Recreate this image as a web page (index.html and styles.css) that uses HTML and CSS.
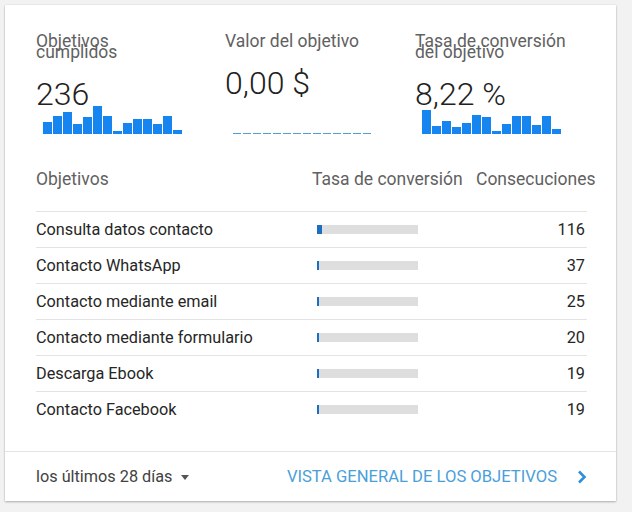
FILE: index.html
```html
<!DOCTYPE html>
<html lang="es">
<head>
<meta charset="utf-8">
<title>Objetivos</title>
<link rel="stylesheet" href="styles.css">
</head>
<body>
<div class="card">
  <div class="metrics">
    <div class="metric">
      <div class="m-title">Objetivos<br>cumplidos</div>
      <div class="m-value">236</div>
      <div class="chart">
        <span class="bar" style="height:12px"></span><span class="bar" style="height:18px"></span><span class="bar" style="height:22px"></span><span class="bar" style="height:10px"></span><span class="bar" style="height:17px"></span><span class="bar" style="height:28px"></span><span class="bar" style="height:18px"></span><span class="bar" style="height:3px"></span><span class="bar" style="height:11px"></span><span class="bar" style="height:15px"></span><span class="bar" style="height:15px"></span><span class="bar" style="height:10px"></span><span class="bar" style="height:18px"></span><span class="bar" style="height:4px"></span>
      </div>
    </div>
    <div class="metric">
      <div class="m-title">Valor del objetivo</div>
      <div class="m-value">0,00 $</div>
      <div class="chart chart-empty">
        <span class="dash"></span><span class="dash"></span><span class="dash"></span><span class="dash"></span><span class="dash"></span><span class="dash"></span><span class="dash"></span><span class="dash"></span><span class="dash"></span><span class="dash"></span><span class="dash"></span><span class="dash"></span><span class="dash"></span><span class="dash"></span>
      </div>
    </div>
    <div class="metric">
      <div class="m-title">Tasa de conversión<br>del objetivo</div>
      <div class="m-value">8,22 %</div>
      <div class="chart">
        <span class="bar" style="height:24px"></span><span class="bar" style="height:8px"></span><span class="bar" style="height:13px"></span><span class="bar" style="height:7px"></span><span class="bar" style="height:11px"></span><span class="bar" style="height:19px"></span><span class="bar" style="height:17px"></span><span class="bar" style="height:3px"></span><span class="bar" style="height:10px"></span><span class="bar" style="height:18px"></span><span class="bar" style="height:18px"></span><span class="bar" style="height:9px"></span><span class="bar" style="height:18px"></span><span class="bar" style="height:5px"></span>
      </div>
    </div>
  </div>

  <div class="table">
    <div class="thead">
      <div class="th th-name">Objetivos</div>
      <div class="th th-rate">Tasa de conversión</div>
      <div class="th th-count">Consecuciones</div>
    </div>
    <div class="tbody">
      <div class="row"><div class="c-name">Consulta datos contacto</div><div class="c-rate"><div class="track"><div class="fill" style="width:5px"></div></div></div><div class="c-count">116</div></div>
      <div class="row"><div class="c-name">Contacto WhatsApp</div><div class="c-rate"><div class="track"><div class="fill" style="width:2px"></div></div></div><div class="c-count">37</div></div>
      <div class="row"><div class="c-name">Contacto mediante email</div><div class="c-rate"><div class="track"><div class="fill" style="width:1.5px"></div></div></div><div class="c-count">25</div></div>
      <div class="row"><div class="c-name">Contacto mediante formulario</div><div class="c-rate"><div class="track"><div class="fill" style="width:1.5px"></div></div></div><div class="c-count">20</div></div>
      <div class="row"><div class="c-name">Descarga Ebook</div><div class="c-rate"><div class="track"><div class="fill" style="width:1.5px"></div></div></div><div class="c-count">19</div></div>
      <div class="row"><div class="c-name">Contacto Facebook</div><div class="c-rate"><div class="track"><div class="fill" style="width:1.5px"></div></div></div><div class="c-count">19</div></div>
    </div>
  </div>

  <div class="footer">
    <div class="range">los últimos 28 días <span class="caret"></span></div>
    <a class="link" href="#">VISTA GENERAL DE LOS OBJETIVOS
      <svg class="chev" width="10" height="14" viewBox="0 0 10 14"><path d="M2 1.5 L7.5 7 L2 12.5" fill="none" stroke="#2f8fdc" stroke-width="2.6"/></svg>
    </a>
  </div>
</div>
</body>
</html>
```

FILE: styles.css
```css
html, body {
  margin: 0;
  padding: 0;
}
body {
  background: #f2f2f2;
  font-family: Roboto, "Liberation Sans", sans-serif;
  width: 632px;
  height: 512px;
  overflow: hidden;
}
.card {
  margin: 5px 0 0 5px;
  width: 611px;
  height: 496px;
  background: #fff;
  box-shadow: 0 1px 2px rgba(0,0,0,0.28), 0 0 1px rgba(0,0,0,0.12);
  display: flex;
  flex-direction: column;
  box-sizing: border-box;
}
.metrics {
  display: grid;
  grid-template-columns: 189px 190px 190px;
  padding: 31px 0 0 31px;
  height: 129px;
  box-sizing: border-box;
}
.metric {
  display: flex;
  flex-direction: column;
}
.m-title {
  font-size: 17.5px;
  line-height: 11px;
  color: #616161;
  white-space: nowrap;
}
.m-value {
  font-size: 32px;
  font-weight: 300;
  line-height: 26px;
  color: #212121;
  margin-top: 23px;
  white-space: nowrap;
}
.chart {
  margin-top: auto;
  height: 26px;
  display: flex;
  align-items: flex-end;
  gap: 1px;
  padding-left: 7px;
}
.bar {
  width: 9px;
  background: #1685ef;
  flex: none;
}
.chart-empty {
  gap: 2px;
  padding-left: 8px;
}
.dash {
  width: 8px;
  height: 1px;
  background: #4f9fdb;
  flex: none;
}
.table {
  padding: 0 0 0 31px;
}
.thead {
  display: flex;
  width: 560px;
  margin-top: 30px;
  height: 47px;
  line-height: 30px;
  font-size: 17.5px;
  color: #616161;
}
.th-name {
  flex: 1;
}
.th-rate {
  width: 164px;
  white-space: nowrap;
}
.th-count {
  width: 120px;
  white-space: nowrap;
}
.tbody {
  width: 551px;
}
.row {
  display: flex;
  align-items: center;
  height: 35px;
  border-top: 1px solid #e3e3e3;
  font-size: 16.25px;
  color: #262626;
}
.c-name {
  flex: 1;
}
.c-rate {
  width: 170px;
}
.track {
  width: 101px;
  height: 9px;
  background: #dedede;
}
.fill {
  height: 100%;
  background: #1c6fc0;
}
.c-count {
  width: 98px;
  text-align: right;
  padding-right: 2px;
}
.footer {
  margin-top: auto;
  height: 50px;
  border-top: 1px solid #e3e3e3;
  box-sizing: border-box;
  display: flex;
  align-items: center;
  justify-content: space-between;
  padding: 0 27px 0 31px;
  font-size: 16.25px;
}
.range {
  color: #424242;
  display: flex;
  align-items: center;
}
.caret {
  display: inline-block;
  width: 0;
  height: 0;
  border-left: 4px solid transparent;
  border-right: 4px solid transparent;
  border-top: 5px solid #555;
  margin-left: 9px;
  margin-top: 2px;
}
.link {
  color: #4a9fda;
  text-decoration: none;
  font-size: 16.6px;
  display: flex;
  align-items: center;
  margin-right: 2px;
}
.chev {
  margin-left: 20px;
}
```
